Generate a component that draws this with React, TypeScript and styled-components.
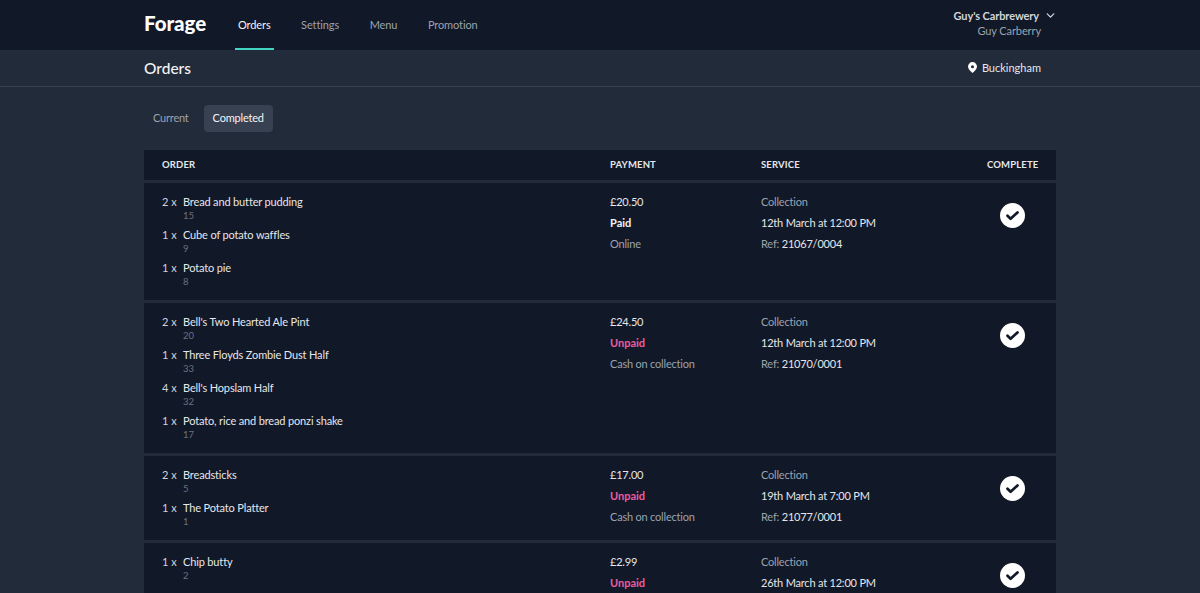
import React from "react";
import styled, { createGlobalStyle } from "styled-components";
import { ChevronDown } from "lucide-react";

type Item = { qty: number; name: string; code: number };

type Order = {
  items: Item[];
  total: string;
  paid: boolean;
  method?: string;
  date: string;
  ref?: string;
};

const orders: Order[] = [
  {
    items: [
      { qty: 2, name: "Bread and butter pudding", code: 15 },
      { qty: 1, name: "Cube of potato waffles", code: 9 },
      { qty: 1, name: "Potato pie", code: 8 },
    ],
    total: "£20.50",
    paid: true,
    method: "Online",
    date: "12th March at 12:00 PM",
    ref: "21067/0004",
  },
  {
    items: [
      { qty: 2, name: "Bell's Two Hearted Ale Pint", code: 20 },
      { qty: 1, name: "Three Floyds Zombie Dust Half", code: 33 },
      { qty: 4, name: "Bell's Hopslam Half", code: 32 },
      { qty: 1, name: "Potato, rice and bread ponzi shake", code: 17 },
    ],
    total: "£24.50",
    paid: false,
    method: "Cash on collection",
    date: "12th March at 12:00 PM",
    ref: "21070/0001",
  },
  {
    items: [
      { qty: 2, name: "Breadsticks", code: 5 },
      { qty: 1, name: "The Potato Platter", code: 1 },
    ],
    total: "£17.00",
    paid: false,
    method: "Cash on collection",
    date: "19th March at 7:00 PM",
    ref: "21077/0001",
  },
  {
    items: [{ qty: 1, name: "Chip butty", code: 2 }],
    total: "£2.99",
    paid: false,
    date: "26th March at 12:00 PM",
  },
];

const navLinks = ["Orders", "Settings", "Menu", "Promotion"];

const CheckIcon = () => (
  <svg width="25" height="25" viewBox="0 0 25 25">
    <circle cx="12.5" cy="12.5" r="12.5" fill="#ffffff" />
    <path
      d="M7.500 12.800l3.100 3 6.900-6.300"
      fill="none"
      stroke="#111827"
      strokeWidth="2.700"
      strokeLinecap="round"
      strokeLinejoin="round"
    />
  </svg>
);

const PinIcon = () => (
  <svg width="9" height="11" viewBox="0 0 10 12">
    <path
      fillRule="evenodd"
      d="M5 0a5 5 0 0 1 5 5c0 2.700-2.600 5.400-5 7-2.400-1.600-5-4.300-5-7a5 5 0 0 1 5-5zm0 3.400a1.700 1.700 0 1 0 0 3.400 1.700 1.700 0 0 0 0-3.400z"
      fill="#ffffff"
    />
  </svg>
);

const App = () => {
  return (
    <>
      <GlobalStyle />
      <TopBar>
        <Logo>Forage</Logo>
        <Nav>
          {navLinks.map((link, i) => (
            <NavLink key={link} $active={i === 0}>
              {link}
            </NavLink>
          ))}
        </Nav>
        <Account>
          <AccountName>
            Guy's Carbrewery
            <ChevronDown size={13} strokeWidth={2.4} />
          </AccountName>
          <AccountUser>Guy Carberry</AccountUser>
        </Account>
      </TopBar>
      <SubBar>
        <PageTitle>Orders</PageTitle>
        <Location>
          <PinIcon />
          Buckingham
        </Location>
      </SubBar>
      <Content>
        <Tabs>
          <Tab>Current</Tab>
          <Tab $active>Completed</Tab>
        </Tabs>
        <Table>
          <HeaderRow>
            <HeaderCell>Order</HeaderCell>
            <HeaderCell>Payment</HeaderCell>
            <HeaderCell>Service</HeaderCell>
            <HeaderCell>Complete</HeaderCell>
          </HeaderRow>
          {orders.map((order) => (
            <OrderRow key={order.date + order.total}>
              <div>
                {order.items.map((item) => (
                  <ItemRow key={item.name}>
                    <Qty>{item.qty} x</Qty>
                    <div>
                      <ItemName>{item.name}</ItemName>
                      <ItemCode>{item.code}</ItemCode>
                    </div>
                  </ItemRow>
                ))}
              </div>
              <InfoCell>
                <InfoLine>{order.total}</InfoLine>
                <PayState $paid={order.paid}>
                  {order.paid ? "Paid" : "Unpaid"}
                </PayState>
                {order.method && <InfoLine $muted>{order.method}</InfoLine>}
              </InfoCell>
              <InfoCell>
                <InfoLine $muted>Collection</InfoLine>
                <InfoLine>{order.date}</InfoLine>
                {order.ref && (
                  <InfoLine>
                    <RefLabel>Ref:</RefLabel> {order.ref}
                  </InfoLine>
                )}
              </InfoCell>
              <CompleteCell>
                <CheckIcon />
              </CompleteCell>
            </OrderRow>
          ))}
        </Table>
      </Content>
    </>
  );
};

export default App;

const GlobalStyle = createGlobalStyle`
  html, body {
    margin: 0;
    height: 100%;
    overflow: hidden;
    background-color: #222b3a;
    color: #f3f4f6;
    font-family: "Lato", "Noto Sans", sans-serif;
    font-size: 11px;
  }
`;

const TopBar = styled.header`
  display: flex;
  align-items: stretch;
  height: 50px;
  padding: 0 144px;
  background-color: #111827;
`;

const Logo = styled.div`
  align-self: center;
  width: 94px;
  margin-top: -5px;
  color: #ffffff;
  font-size: 20.500px;
  font-weight: 900;
`;

const Nav = styled.nav`
  display: flex;
  gap: 24.500px;
  margin-left: -3px;
`;

const NavLink = styled.a<{ $active?: boolean }>`
  display: flex;
  align-items: center;
  padding: 0 3px;
  border-bottom: 2px solid ${(p) => (p.$active ? "#40d5c3" : "transparent")};
  color: ${(p) => (p.$active ? "#f3f4f6" : "#9ca3af")};
  font-size: 11px;
  letter-spacing: -0.1px;
`;

const Account = styled.div`
  display: flex;
  flex-direction: column;
  align-items: flex-end;
  margin-left: auto;
  padding: 8px 15px 0 0;
`;

const AccountName = styled.div`
  display: flex;
  align-items: center;
  gap: 5px;
  margin-right: -16px;
  color: #d1d5db;
  font-size: 11px;
  font-weight: 700;
  letter-spacing: -0.1px;
  line-height: 15px;
`;

const AccountUser = styled.div`
  color: #9ca3af;
  font-size: 11px;
  letter-spacing: -0.1px;
  line-height: 15px;
`;

const SubBar = styled.div`
  display: flex;
  align-items: center;
  justify-content: space-between;
  height: 36px;
  padding: 0 159px 0 144px;
  border-bottom: 1px solid #374151;
`;

const PageTitle = styled.h1`
  margin: 0;
  color: #f3f4f6;
  font-size: 15.500px;
  font-weight: 500;
`;

const Location = styled.div`
  display: flex;
  align-items: center;
  gap: 5px;
  margin-top: -1px;
  color: #e5e7eb;
  font-size: 11px;
`;

const Content = styled.main`
  padding: 18px 144px 0;
`;

const Tabs = styled.div`
  display: flex;
  gap: 6px;
`;

const Tab = styled.button<{ $active?: boolean }>`
  height: 27px;
  padding: 0 9px 2px;
  border: 0;
  border-radius: 4px;
  background-color: ${(p) => (p.$active ? "#374151" : "transparent")};
  color: ${(p) => (p.$active ? "#f3f4f6" : "#9ca3af")};
  font-family: inherit;
  font-size: 11px;
  letter-spacing: -0.2px;
`;

const Table = styled.div`
  display: flex;
  flex-direction: column;
  gap: 3px;
  margin-top: 18px;
`;

const Row = styled.div`
  display: grid;
  grid-template-columns: 448px 151px 1fr 51px;
  padding: 0 18px;
  background-color: #111827;
`;

const HeaderRow = styled(Row)`
  align-items: center;
  height: 30px;
  padding-bottom: 2px;
  box-sizing: border-box;
`;

const HeaderCell = styled.div`
  color: #e5e7eb;
  font-size: 9.500px;
  font-weight: 700;
  letter-spacing: 0.15px;
  text-transform: uppercase;
  white-space: nowrap;
`;

const OrderRow = styled(Row)`
  padding-top: 10px;
  padding-bottom: 8px;
`;

const ItemRow = styled.div`
  display: flex;
  height: 33px;
`;

const Qty = styled.div`
  width: 21px;
  color: #d1d5db;
  line-height: 17px;
  white-space: nowrap;
`;

const ItemName = styled.div`
  color: #e5e7eb;
  letter-spacing: -0.15px;
  line-height: 17px;
`;

const ItemCode = styled.div`
  color: #6b7280;
  font-size: 9.500px;
  line-height: 11px;
`;

const InfoCell = styled.div`
  display: flex;
  flex-direction: column;
  gap: 4px;
`;

const InfoLine = styled.div<{ $muted?: boolean }>`
  color: ${(p) => (p.$muted ? "#9ca3af" : "#e5e7eb")};
  letter-spacing: -0.2px;
  line-height: 17px;
`;

const PayState = styled.div<{ $paid: boolean }>`
  color: ${(p) => (p.$paid ? "#f3f4f6" : "#ec5c9f")};
  font-weight: 700;
  line-height: 17px;
`;

const RefLabel = styled.span`
  color: #9ca3af;
`;

const CompleteCell = styled.div`
  display: flex;
  justify-content: center;
  padding-top: 10px;
`;
